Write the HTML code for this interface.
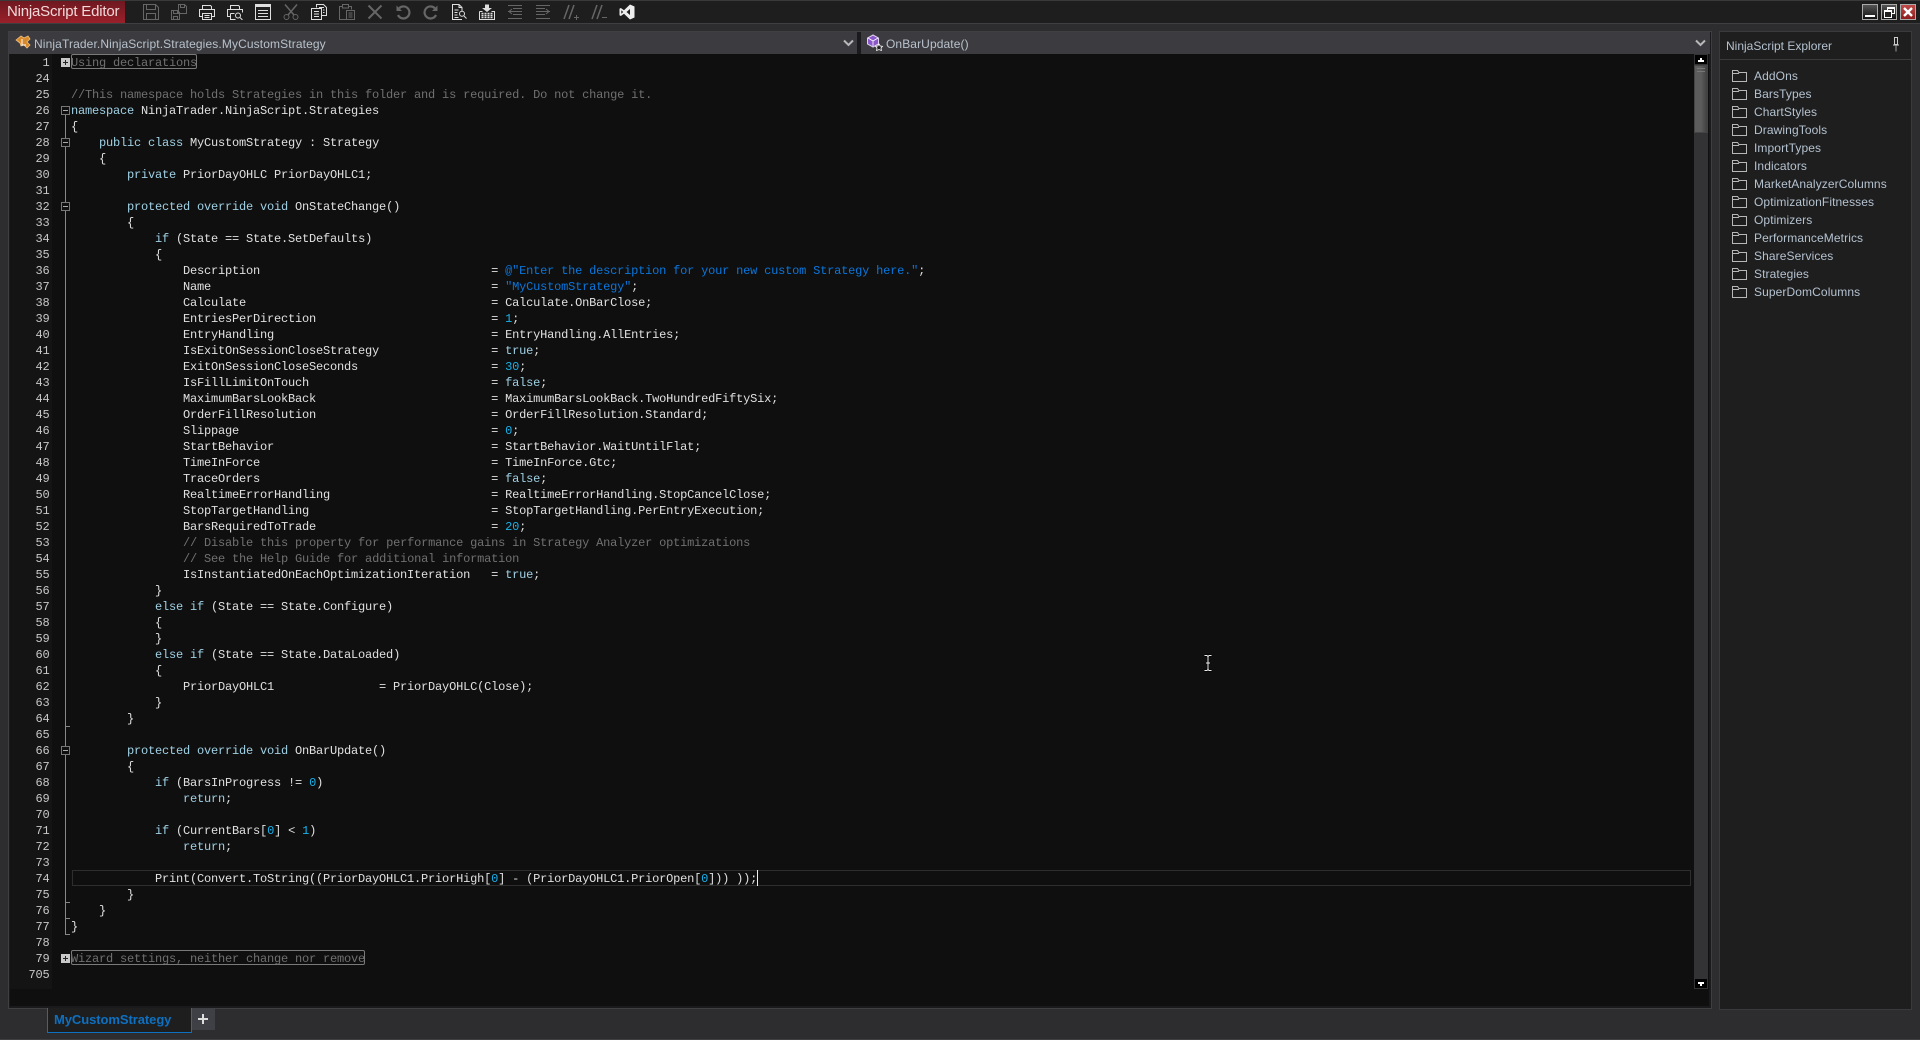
<!DOCTYPE html>
<html><head><meta charset="utf-8"><title>NinjaScript Editor</title>
<style>
html,body{margin:0;padding:0;width:1920px;height:1040px;overflow:hidden;background:#2d2d30;font-family:"Liberation Sans",Arial,sans-serif}
div,pre,svg{position:absolute;margin:0;padding:0;box-sizing:border-box}
pre{font-family:"Liberation Mono",monospace;font-size:12px;line-height:16px;letter-spacing:-.2px;color:#e0e0e0;white-space:pre}
.k{color:#a0d0e4}.s{color:#0a76dc}.n{color:#19b0e8}.c{color:#707070}
.ic{top:4px;width:16px;height:16px;fill:none;stroke:currentColor;stroke-width:1}
.d{color:#666}.e{color:#dedede}
.ex{left:1754px;height:18px;line-height:18px;font-size:12px;letter-spacing:.1px;color:#b4c2d0;white-space:nowrap}
.fo{left:1732px;width:15px;height:12px;fill:none;stroke:#b8b8b8;stroke-width:1}
.fb{left:61px;width:9px;height:9px;border:1px solid #777;background:#0f0f0f}
.fb:after{content:"";position:absolute;left:1px;top:3px;width:5px;height:1px;background:#aaa}
.pb{left:61px;width:9px;height:9px;background:#c8c8c8}
.pb:before{content:"";position:absolute;left:2px;top:4px;width:5px;height:1px;background:#222}
.pb:after{content:"";position:absolute;left:4px;top:2px;width:1px;height:5px;background:#222}
.t{left:65px;width:5px;height:1px;background:#888}
.wb{top:4px;width:16px;height:16px;border:1px solid #aaa;background:linear-gradient(#555,#111)}
</style></head><body>
<!-- title bar -->
<div style="left:0;top:0;width:1920px;height:24px;background:#1e1e1e;border-top:1px solid #3a3a3a;border-bottom:1px solid #3f3f42"></div>
<div style="left:0;top:1px;width:125px;height:22px;background:linear-gradient(#6e1820,#9a202a);color:#f2dada;font-size:15px;letter-spacing:-.2px;line-height:21px;padding-left:7px;white-space:nowrap">NinjaScript Editor</div>
<svg class="ic d" style="left:143px" viewBox="0 0 16 16"><path d="M.5.5h12l3 3v12H.5zM3.5.5v5h9v-5M3.5 15.5v-6h9v6"/></svg>
<svg class="ic d" style="left:171px" viewBox="0 0 16 16"><path d="M7.5.5h6l2 2v7h-8zM9.5.5v3h4v-3M.5 6.5h6l2 2v7H.5zM2.5 6.5v3h4v-3M2.5 15.5v-3h4v3"/></svg>
<svg class="ic e" style="left:199px" viewBox="0 0 16 16"><path d="M3.5 5V1.5h8l1 1V5M3.5 12.5h-3v-7h15v7h-3M3.5 9.5h9v6h-9zM5.5 11.5h5M5.5 13.5h5"/></svg>
<svg class="ic e" style="left:227px" viewBox="0 0 16 16"><path d="M3.5 5V1.5h8l1 1V5M3.5 12.5h-3v-7h15v3M3.5 9.5h4M3.5 9.5v6h5"/><circle cx="11" cy="11.5" r="2.5"/><path d="M13 13.5l2.5 2.5"/></svg>
<svg class="ic e" style="left:255px" viewBox="0 0 16 16"><path d="M.5.5h15v15H.5zM3 6.5h10M3 9.5h10M3 12.5h10"/><path d="M1 2h14" stroke-width="2"/></svg>
<svg class="ic d" style="left:283px" viewBox="0 0 16 16"><path d="M2 .5l9 10.500M14 .5L5 11" stroke-width="1.500"/><circle cx="3.500" cy="13" r="2.500"/><circle cx="12.500" cy="13" r="2.500"/></svg>
<svg class="ic e" style="left:311px" viewBox="0 0 16 16"><path d="M5.500 3.500V.5h7l3 3v8h-5M.5 4.500h10v11H.5zM3 7.500h5M3 10h5M3 12.500h5M8 3.500h5M12 6h1.500M12 8.500h1.500"/></svg>
<svg class="ic d" style="left:339px" viewBox="0 0 16 16"><path d="M3.500 2.500h-3v13h7M9.500 2.500h3v3M3.500 4V.5h6V4zM7.500 6.500h8v9h-8zM9.500 9h4M9.500 11h4M9.500 13h4"/></svg>
<svg class="ic d" style="left:367px" viewBox="0 0 16 16"><path d="M1.500 1.500l13 13M14.500 1.500l-13 13" stroke-width="2"/></svg>
<svg class="ic d" style="left:395px" viewBox="0 0 16 16"><path d="M4.200 4.200A6 6 0 1 1 3 11" stroke-width="2.200"/><path d="M1.500 1.500v5.500h5.500z" fill="#666" stroke="none"/></svg>
<svg class="ic d" style="left:423px" viewBox="0 0 16 16"><path d="M11.800 4.200A6 6 0 1 0 13 11" stroke-width="2.200"/><path d="M14.500 1.500v5.500h-5.500z" fill="#666" stroke="none"/></svg>
<svg class="ic e" style="left:451px" viewBox="0 0 16 16"><path d="M11 7V3.500L8 .5H1.500v15H11M8 .5v3h3M3.500 6h4M3.500 8.500h3M3.500 11h3M3.500 13.500h4"/><circle cx="11" cy="9.800" r="2.500"/><path d="M13 12l2.500 2.500"/></svg>
<svg class="ic e" style="left:479px" viewBox="0 0 16 16"><path d="M6 .5h4V4h3l-5 4-5-4h3z" fill="#dedede" stroke="none"/><path d="M.5 7.500h3M12.500 7.500h3v8H.5v-8"/><path d="M2.500 9.500h11M2.500 11.500h11M2.500 13.500h11" stroke-dasharray="2 1" stroke-width="1.400"/></svg>
<svg class="ic d" style="left:507px" viewBox="0 0 16 16"><path d="M1 1.500h14M6 4.500h9M1 7.500h14M6 10.500h9M1 14.500h14M5.500 7.500L2.500 7.500M5 5L2 7.500 5 10"/></svg>
<svg class="ic d" style="left:535px" viewBox="0 0 16 16"><path d="M1 1.500h14M1 4.500h9M1 7.500h14M1 10.500h9M1 14.500h14M11 5l3 2.500L11 10"/></svg>
<svg class="ic d" style="left:563px" viewBox="0 0 16 16"><path d="M6 1L1 15M11 1L6 15" stroke-width="1.500"/><path d="M11 13.500h5M13.500 11v5"/></svg>
<svg class="ic d" style="left:591px" viewBox="0 0 16 16"><path d="M6 1L1 15M11 1L6 15" stroke-width="1.500"/><path d="M11 13.500h5"/></svg>
<svg class="ic" style="left:619px;color:#eee" viewBox="0 0 16 16"><path d="M11 .5l4.500 2v11L11 15.500 5 9.700 1.800 12 .5 11.200V4.800L1.800 4 5 6.300zM11 5L7.500 8 11 11zM2.300 6.200v3.600L4.200 8z" fill="#eee" fill-rule="evenodd" stroke="none"/></svg>
<div class="wb" style="left:1862px"><div style="left:2px;top:10px;width:10px;height:2px;background:#fff"></div></div>
<div class="wb" style="left:1881px"><div style="left:5px;top:2px;width:8px;height:7px;border:1px solid #fff;border-top-width:2px"></div><div style="left:2px;top:5px;width:8px;height:8px;border:1px solid #fff;border-top-width:2px;background:#222"></div></div>
<div class="wb" style="left:1900px;background:linear-gradient(#c04a4a,#8e1c1c)"><svg style="left:2px;top:2px;width:10px;height:10px" viewBox="0 0 10 10"><path d="M1 1l8 8M9 1l-8 8" stroke="#fff" stroke-width="2.400"/></svg></div>
<!-- editor frame -->
<div style="left:8px;top:31px;width:1704px;height:978px;border:1px solid #3f3f42;background:#1a1a1c"></div>
<div style="left:9px;top:32px;width:848px;height:22px;background:#3c3c40"></div>
<div style="left:861px;top:32px;width:849px;height:22px;background:#3c3c40"></div>
<div style="left:34px;top:32px;height:22px;line-height:24px;font-size:12px;letter-spacing:.12px;color:#b8c2cc;white-space:nowrap">NinjaTrader.NinjaScript.Strategies.MyCustomStrategy</div>
<svg style="left:15px;top:34px;width:18px;height:17px" viewBox="0 0 18 17"><path d="M1 6l5-4 3 2 4-2 2 3-3 3 3 3-3 3-3-3-3 1-1-3z" fill="#d88a2a" stroke="#f0c080" stroke-width=".8"/><path d="M7 5v6h4" stroke="#fff" stroke-width="1" fill="none"/></svg>
<svg style="left:843px;top:39px;width:11px;height:8px" viewBox="0 0 11 8"><path d="M1 1.500l4.500 4.500L10 1.500" fill="none" stroke="#b8b8b8" stroke-width="2"/></svg>
<div style="left:886px;top:32px;height:22px;line-height:24px;font-size:12px;letter-spacing:.1px;color:#b8c2cc;white-space:nowrap">OnBarUpdate()</div>
<svg style="left:866px;top:34px;width:18px;height:18px" viewBox="0 0 18 18"><path d="M7 1l5.500 3v6L7 13l-5.500-3V4z" fill="#8a58c8" stroke="#e0d0f0"/><path d="M2 4l5 3 5-3M7 7v5" stroke="#fff" fill="none" stroke-width=".8"/><path d="M13 10l1.200 2 2.300.3-1.500 1.700.4 2.500-2.400-1-2.400 1 .4-2.500-1.500-1.700 2.300-.3z" fill="#222" stroke="#fff" stroke-width=".8"/></svg>
<svg style="left:1695px;top:39px;width:11px;height:8px" viewBox="0 0 11 8"><path d="M1 1.500l4.500 4.500L10 1.500" fill="none" stroke="#b8b8b8" stroke-width="2"/></svg>
<!-- code area -->
<div style="left:10px;top:54px;width:1699px;height:952px;background:#0f0f0f"></div>
<div style="left:10px;top:54px;width:42px;height:935px;background:#141414"></div>
<pre style="left:10px;top:55px;width:39.500px;text-align:right;color:#c8c8c8">1
24
25
26
27
28
29
30
31
32
33
34
35
36
37
38
39
40
41
42
43
44
45
46
47
48
49
50
51
52
53
54
55
56
57
58
59
60
61
62
63
64
65
66
67
68
69
70
71
72
73
74
75
76
77
78
79
705</pre>
<!-- current line -->
<div style="left:72px;top:870px;width:1619px;height:16px;border:1px solid #2e2e2e"></div>
<div style="left:757px;top:870px;width:1px;height:16px;background:#eee"></div>
<!-- folding -->
<div style="left:65px;top:115px;width:1px;height:819px;background:#888"></div>
<div class="t" style="top:726px"></div><div class="t" style="top:902px"></div><div class="t" style="top:918px"></div><div class="t" style="top:934px"></div>
<div class="pb" style="top:58px"></div>
<div class="fb" style="top:106px"></div>
<div class="fb" style="top:138px"></div>
<div class="fb" style="top:202px"></div>
<div class="fb" style="top:746px"></div>
<div class="pb" style="top:954px"></div>
<div style="left:71px;top:54px;width:126px;height:15px;border:1px solid #7a7a7a;border-radius:2px"></div>
<div style="left:71px;top:950px;width:294px;height:15px;border:1px solid #7a7a7a;border-radius:2px"></div>
<pre style="left:71px;top:55px"><span class="c">Using declarations</span>

<span class="c">//This namespace holds Strategies in this folder and is required. Do not change it.</span>
<span class="k">namespace</span> NinjaTrader.NinjaScript.Strategies
{
    <span class="k">public class</span> MyCustomStrategy : Strategy
    {
        <span class="k">private</span> PriorDayOHLC PriorDayOHLC1;

        <span class="k">protected override void</span> OnStateChange()
        {
            <span class="k">if</span> (State == State.SetDefaults)
            {
                Description                                 = <span class="s">@"Enter the description for your new custom Strategy here."</span>;
                Name                                        = <span class="s">"MyCustomStrategy"</span>;
                Calculate                                   = Calculate.OnBarClose;
                EntriesPerDirection                         = <span class="n">1</span>;
                EntryHandling                               = EntryHandling.AllEntries;
                IsExitOnSessionCloseStrategy                = <span class="k">true</span>;
                ExitOnSessionCloseSeconds                   = <span class="n">30</span>;
                IsFillLimitOnTouch                          = <span class="k">false</span>;
                MaximumBarsLookBack                         = MaximumBarsLookBack.TwoHundredFiftySix;
                OrderFillResolution                         = OrderFillResolution.Standard;
                Slippage                                    = <span class="n">0</span>;
                StartBehavior                               = StartBehavior.WaitUntilFlat;
                TimeInForce                                 = TimeInForce.Gtc;
                TraceOrders                                 = <span class="k">false</span>;
                RealtimeErrorHandling                       = RealtimeErrorHandling.StopCancelClose;
                StopTargetHandling                          = StopTargetHandling.PerEntryExecution;
                BarsRequiredToTrade                         = <span class="n">20</span>;
                <span class="c">// Disable this property for performance gains in Strategy Analyzer optimizations</span>
                <span class="c">// See the Help Guide for additional information</span>
                IsInstantiatedOnEachOptimizationIteration   = <span class="k">true</span>;
            }
            <span class="k">else if</span> (State == State.Configure)
            {
            }
            <span class="k">else if</span> (State == State.DataLoaded)
            {
                PriorDayOHLC1               = PriorDayOHLC(Close);
            }
        }

        <span class="k">protected override void</span> OnBarUpdate()
        {
            <span class="k">if</span> (BarsInProgress != <span class="n">0</span>)
                <span class="k">return</span>;

            <span class="k">if</span> (CurrentBars[<span class="n">0</span>] &lt; <span class="n">1</span>)
                <span class="k">return</span>;

            Print(Convert.ToString((PriorDayOHLC1.PriorHigh[<span class="n">0</span>] - (PriorDayOHLC1.PriorOpen[<span class="n">0</span>])) ));
        }
    }
}

<span class="c">Wizard settings, neither change nor remove</span></pre>
<!-- scrollbar -->
<div style="left:1694px;top:54px;width:14px;height:935px;background:#333335"></div>
<div style="left:1695px;top:55px;width:12px;height:9px;background:#000"></div>
<div style="left:1698px;top:60px;width:6px;height:2px;background:#fff"></div><div style="left:1700px;top:58px;width:2px;height:2px;background:#fff"></div>
<div style="left:1694px;top:65px;width:14px;height:68px;background:linear-gradient(90deg,#5c5c5c 0,#5c5c5c 50%,#404040 100%);border:1px solid #444"></div>
<div style="left:1697px;top:68px;width:8px;height:1px;background:#777"></div><div style="left:1697px;top:71px;width:8px;height:1px;background:#777"></div>
<div style="left:1695px;top:979px;width:12px;height:9px;background:#000"></div>
<div style="left:1698px;top:982px;width:6px;height:2px;background:#fff"></div><div style="left:1700px;top:984px;width:2px;height:2px;background:#fff"></div>
<!-- explorer -->
<div style="left:1719px;top:31px;width:193px;height:979px;background:#1e1e1e;border:1px solid #3a3a3c"></div>
<div style="left:1720px;top:59px;width:191px;height:1px;background:#3a3a3c"></div>
<div style="left:1726px;top:37px;height:18px;line-height:18px;font-size:12px;color:#b4c2d0;white-space:nowrap">NinjaScript Explorer</div>
<svg style="left:1892px;top:37px;width:8px;height:15px" viewBox="0 0 8 15"><path d="M2.500.5h3v7h-3zM1 8h6" fill="none" stroke="#ccc"/><path d="M4 8.500v6" stroke="#999"/></svg>
<svg class="fo" style="top:70px" viewBox="0 0 15 12"><path d="M.5 11.500V.5h5l1.500 2h7.500v9zM.5 3.500h6l.5-1"/></svg><div class="ex" style="top:67px">AddOns</div>
<svg class="fo" style="top:88px" viewBox="0 0 15 12"><path d="M.5 11.500V.5h5l1.500 2h7.500v9zM.5 3.500h6l.5-1"/></svg><div class="ex" style="top:85px">BarsTypes</div>
<svg class="fo" style="top:106px" viewBox="0 0 15 12"><path d="M.5 11.500V.5h5l1.500 2h7.500v9zM.5 3.500h6l.5-1"/></svg><div class="ex" style="top:103px">ChartStyles</div>
<svg class="fo" style="top:124px" viewBox="0 0 15 12"><path d="M.5 11.500V.5h5l1.500 2h7.500v9zM.5 3.500h6l.5-1"/></svg><div class="ex" style="top:121px">DrawingTools</div>
<svg class="fo" style="top:142px" viewBox="0 0 15 12"><path d="M.5 11.500V.5h5l1.500 2h7.500v9zM.5 3.500h6l.5-1"/></svg><div class="ex" style="top:139px">ImportTypes</div>
<svg class="fo" style="top:160px" viewBox="0 0 15 12"><path d="M.5 11.500V.5h5l1.500 2h7.500v9zM.5 3.500h6l.5-1"/></svg><div class="ex" style="top:157px">Indicators</div>
<svg class="fo" style="top:178px" viewBox="0 0 15 12"><path d="M.5 11.500V.5h5l1.500 2h7.500v9zM.5 3.500h6l.5-1"/></svg><div class="ex" style="top:175px">MarketAnalyzerColumns</div>
<svg class="fo" style="top:196px" viewBox="0 0 15 12"><path d="M.5 11.500V.5h5l1.500 2h7.500v9zM.5 3.500h6l.5-1"/></svg><div class="ex" style="top:193px">OptimizationFitnesses</div>
<svg class="fo" style="top:214px" viewBox="0 0 15 12"><path d="M.5 11.500V.5h5l1.500 2h7.500v9zM.5 3.500h6l.5-1"/></svg><div class="ex" style="top:211px">Optimizers</div>
<svg class="fo" style="top:232px" viewBox="0 0 15 12"><path d="M.5 11.500V.5h5l1.500 2h7.500v9zM.5 3.500h6l.5-1"/></svg><div class="ex" style="top:229px">PerformanceMetrics</div>
<svg class="fo" style="top:250px" viewBox="0 0 15 12"><path d="M.5 11.500V.5h5l1.500 2h7.500v9zM.5 3.500h6l.5-1"/></svg><div class="ex" style="top:247px">ShareServices</div>
<svg class="fo" style="top:268px" viewBox="0 0 15 12"><path d="M.5 11.500V.5h5l1.500 2h7.500v9zM.5 3.500h6l.5-1"/></svg><div class="ex" style="top:265px">Strategies</div>
<svg class="fo" style="top:286px" viewBox="0 0 15 12"><path d="M.5 11.500V.5h5l1.500 2h7.500v9zM.5 3.500h6l.5-1"/></svg><div class="ex" style="top:283px">SuperDomColumns</div>
<!-- tabs -->
<div style="left:47px;top:1008px;width:145px;height:25px;background:#1e1e1e;border:1px solid #0e70c0;border-top:0;color:#0e70c0;font-size:13px;font-weight:bold;line-height:24px;padding-left:6px;white-space:nowrap;letter-spacing:-.07px">MyCustomStrategy</div>
<div style="left:192px;top:1008px;width:23px;height:22px;background:#3f3f46"></div>
<div style="left:198px;top:1018px;width:10px;height:2px;background:#ddd"></div><div style="left:202px;top:1014px;width:2px;height:10px;background:#ddd"></div>
<div style="left:0;top:1039px;width:1920px;height:1px;background:#3f3f42"></div>
<!-- mouse cursor -->
<svg style="left:1203px;top:654px;width:10px;height:18px" viewBox="0 0 10 18"><path d="M1.500 1.500h2.500l1 1 1-1h2.500M5 2.500v13M1.500 16.500h2.500l1-1 1 1h2.500M3 9h4" fill="none" stroke="#000" stroke-width="2.400"/><path d="M1.500 1.500h2.500l1 1 1-1h2.500M5 2.500v13M1.500 16.500h2.500l1-1 1 1h2.500M3 9h4" fill="none" stroke="#eee" stroke-width="1"/></svg>
</body></html>
